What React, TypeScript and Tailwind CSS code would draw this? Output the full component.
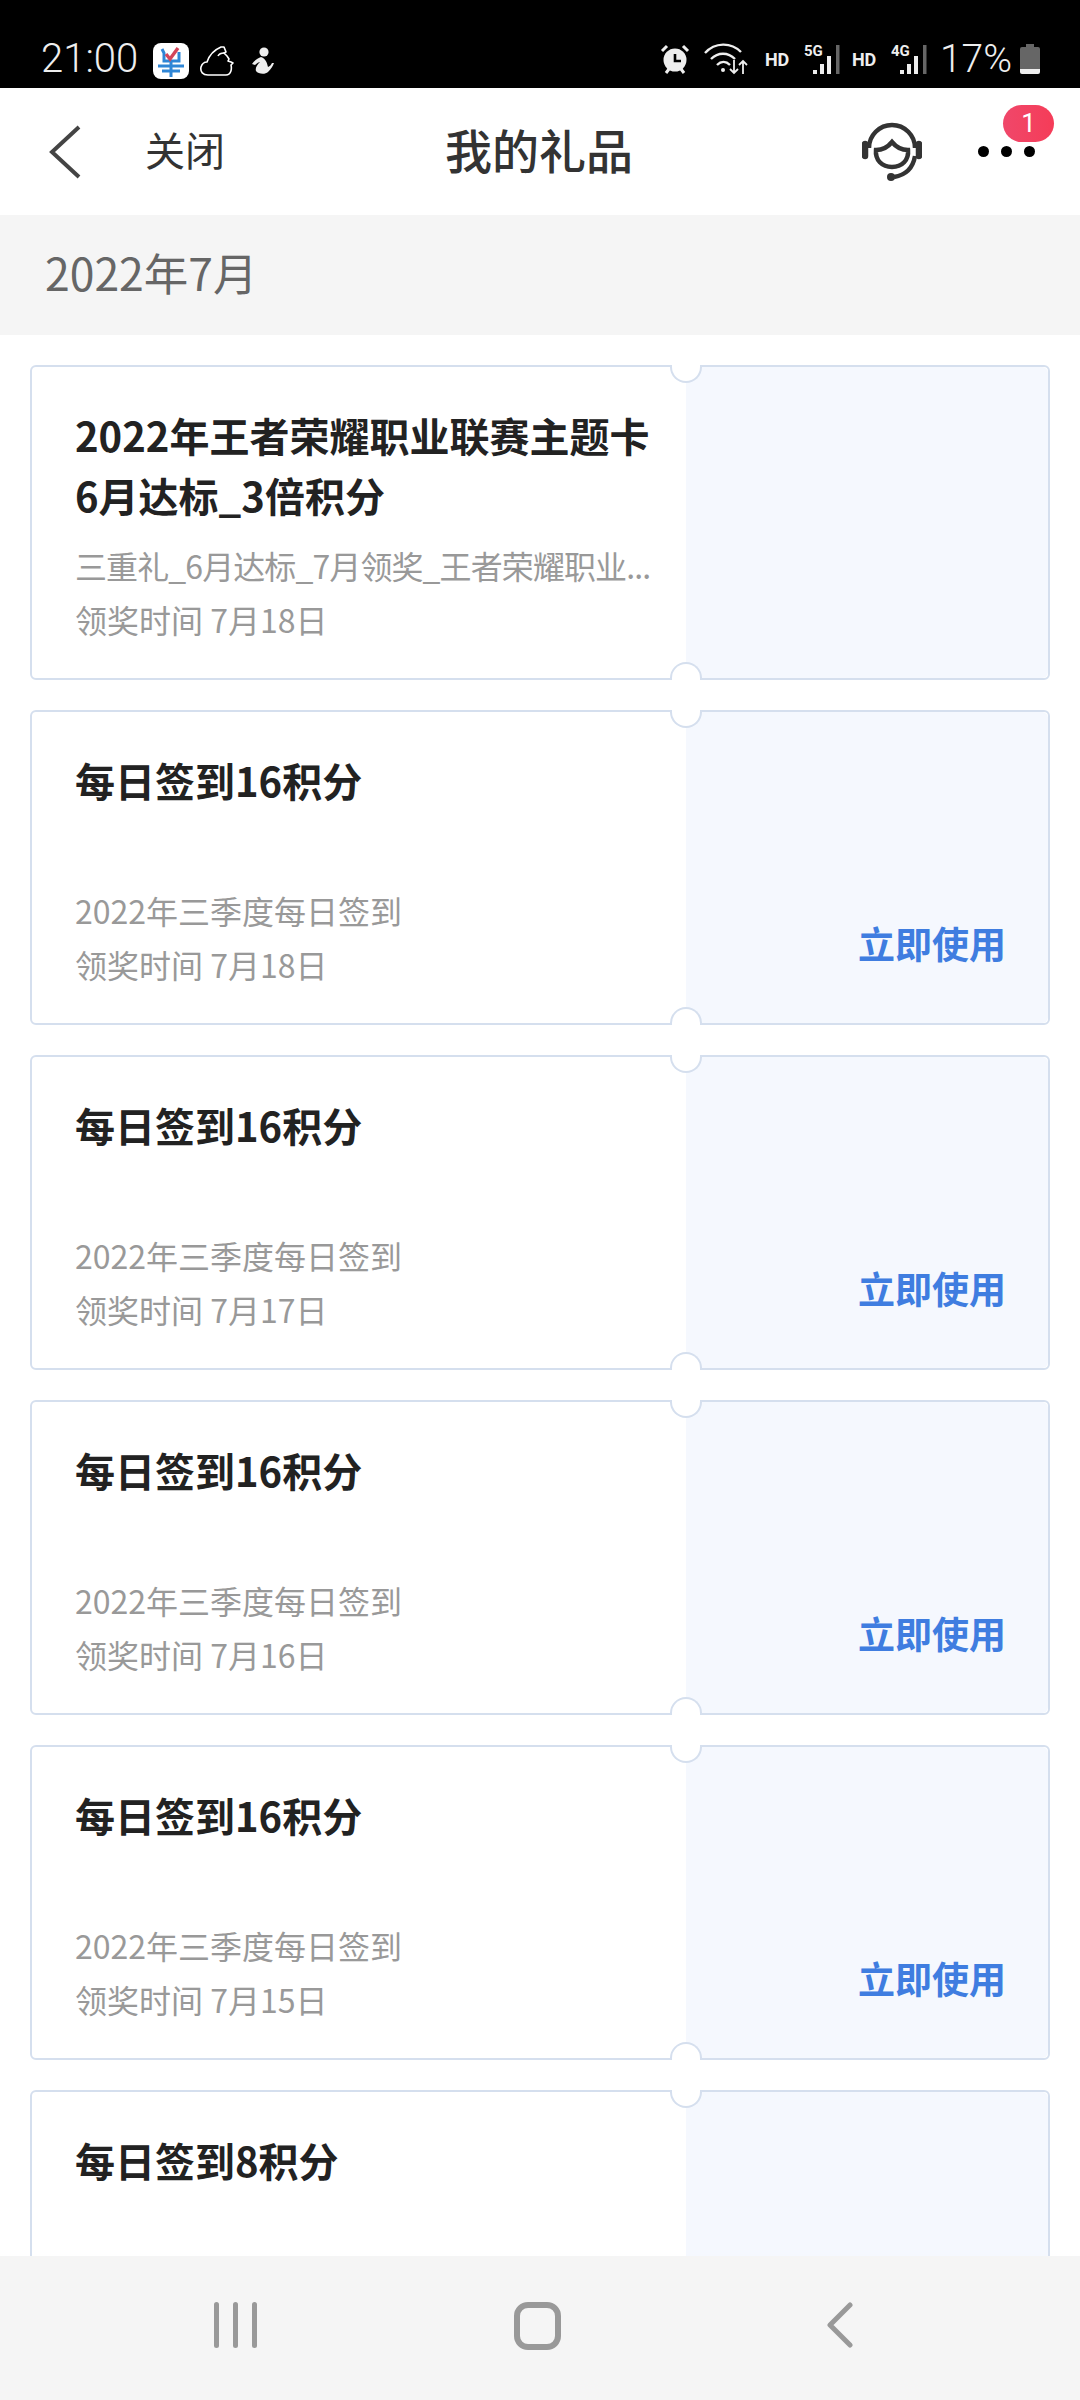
import React from "react";

const cjk = { fontFamily: '"Noto Sans CJK SC", "Noto Sans", sans-serif' };

function AppIcon() {
  return (
    <svg width="36" height="36" viewBox="0 0 36 36">
      <rect width="36" height="36" rx="8" fill="#fff" />
      <path d="M9 6l2 4v8h15V9M5 23h26M9 28h18M18 18v16" stroke="#2f86d6" strokeWidth="3" fill="none" />
      <path d="M13 11l4 5 8-11" stroke="#d2455a" strokeWidth="3.4" fill="none" />
    </svg>
  );
}

function Cloud() {
  return (
    <svg width="34" height="30" viewBox="0 0 34 30" fill="none" stroke="#fff" strokeWidth="1.6" strokeLinejoin="round">
      <path d="M8 29C3 29 0 26 1 21c1-3 3-5 6-5C9 10 14 4 21 1l3 0 2 5-2 1 3 3 2 3-1 2 3 1 2 1-2 2c1 4 0 10-5 10z" />
      <path d="M24 7c-3 0-5 1-6 3" />
    </svg>
  );
}

function Runner() {
  return (
    <svg width="27" height="28" viewBox="0 0 27 28" fill="#eee">
      <circle cx="14" cy="5" r="4.6" />
      <path d="M11 10c-3 1-7 4-9 7l3 1c2-2 4-3 5-3-3 3-5 6-4 9 2 3 9 4 12 1 3-3 5-6 6-9l-2 0c-1 2-2 3-4 4-1-4-2-8-7-10z" />
    </svg>
  );
}

function Alarm() {
  return (
    <svg width="30" height="30" viewBox="0 0 30 30">
      <circle cx="15" cy="16" r="11.5" fill="#eee" />
      <path d="M15 10v7h6" stroke="#000" strokeWidth="2.6" fill="none" />
      <path d="M2 7l5-5M28 7l-5-5M6 29l3-4M24 29l-3-4" stroke="#eee" strokeWidth="3" />
    </svg>
  );
}

function Wifi() {
  return (
    <svg width="44" height="32" viewBox="0 0 44 32" fill="none" stroke="#eee" strokeWidth="2.4">
      <path d="M1 10C11 -1 27 -1 37 9" />
      <path d="M7 16c7-7 17-7 24 0" />
      <path d="M13 22c4-4 9-4 13 0" />
      <circle cx="19" cy="27" r="2" fill="#eee" stroke="none" />
      <path d="M30 17v13M26 26l4 4 4-4" strokeWidth="1.8" />
      <path d="M39 31V18M35 22l4-4 4 4" strokeWidth="1.8" />
    </svg>
  );
}

function Signal({ label }: { label: string }) {
  return (
    <svg width="37" height="32" viewBox="0 0 37 32">
      <text x="0" y="13" fontSize="15" fontWeight="700" fill="#eee" fontFamily="Roboto, sans-serif">{label}</text>
      <rect x="9" y="27" width="4" height="4" fill="#eee" />
      <rect x="16" y="21" width="4" height="10" fill="#eee" />
      <rect x="23" y="13" width="4" height="18" fill="#eee" />
      <rect x="32" y="2" width="3.5" height="29" fill="#666" />
    </svg>
  );
}

function Battery() {
  return (
    <svg width="20" height="32" viewBox="0 0 20 32">
      <path d="M6 1h8v3h4a2 2 0 0 1 2 2v21H0V6a2 2 0 0 1 2-2h4z" fill="#666" />
      <path d="M0 26h20v3a2 2 0 0 1-2 2H2a2 2 0 0 1-2-2z" fill="#eee" />
    </svg>
  );
}

function StatusBar() {
  return (
    <div className="h-[88px] bg-black flex items-end pb-[9px] pl-[41px] pr-[40px] text-[#eee]">
      <span className="text-[40px] leading-[46px] font-light w-[100px] translate-y-[3px]" style={{ fontFamily: "Roboto, sans-serif" }}>21:00</span>
      <div className="ml-[12px] flex items-center">
        <AppIcon />
        <div className="ml-[11px]"><Cloud /></div>
        <div className="ml-[16px]"><Runner /></div>
      </div>
      <div className="ml-auto flex items-center">
        <Alarm />
        <div className="ml-[14px]"><Wifi /></div>
        <span className="ml-[17px] w-[28px] text-[18px] font-bold" style={{ fontFamily: "Roboto, sans-serif" }}>HD</span>
        <div className="ml-[11px]"><Signal label="5G" /></div>
        <span className="ml-[11px] w-[28px] text-[18px] font-bold" style={{ fontFamily: "Roboto, sans-serif" }}>HD</span>
        <div className="ml-[11px]"><Signal label="4G" /></div>
        <span className="ml-[12px] text-[39px] leading-[40px] font-light" style={{ fontFamily: "Roboto, sans-serif" }}>17%</span>
        <div className="ml-[8px]"><Battery /></div>
      </div>
    </div>
  );
}

function Headset() {
  return (
    <svg width="60" height="60" viewBox="0 0 60 60" fill="none" stroke="#333" strokeWidth="4.5">
      <path d="M7 26A23 23 0 0 1 53 26" />
      <path d="M3 22v12" strokeWidth="6.5" strokeLinecap="round" />
      <path d="M57 22v12" strokeWidth="6.5" strokeLinecap="round" />
      <path d="M14 28c7 0 12-3 16-8 4 5 9 8 16 8 1 10-6 17-16 17S13 38 14 28z" />
      <path d="M53 34c-2 12-9 19-21 21" />
      <circle cx="29" cy="55" r="4" fill="#333" stroke="none" />
    </svg>
  );
}

function NavBar() {
  return (
    <div className="h-[127px] bg-white flex items-center relative" style={cjk}>
      <svg className="ml-[47px]" width="36" height="56" viewBox="0 0 36 56" fill="none" stroke="#444" strokeWidth="4">
        <path d="M32 3L5 28l27 25" />
      </svg>
      <span className="ml-[62px] text-[40px] text-[#333] leading-none -translate-y-[3px]">关闭</span>
      <span className="ml-[220px] text-[47px] font-medium text-[#333] leading-none -translate-y-[3px]">我的礼品</span>
      <div className="ml-[229px]"><Headset /></div>
      <div className="ml-[56px] flex gap-[12px]">
        <div className="w-[11px] h-[11px] rounded-full bg-black" />
        <div className="w-[11px] h-[11px] rounded-full bg-black" />
        <div className="w-[11px] h-[11px] rounded-full bg-black" />
      </div>
      <div className="absolute left-[1003px] top-[17px] w-[51px] h-[37px] rounded-full bg-gradient-to-r from-[#f0476a] to-[#f53c58] text-white text-[26px] leading-[37px] text-center" style={{ fontFamily: "Roboto, sans-serif" }}>1</div>
    </div>
  );
}

function Card({ title, desc, time, action, tight }: { title: React.ReactNode; desc: string; time: string; action?: boolean; tight?: boolean }) {
  return (
    <div className="relative h-[315px] shrink-0 flex border-2 border-[#d5dfee] rounded-[6px]" style={cjk}>
      <div className="w-[654px] bg-white rounded-l-[6px] pl-[43px] pt-[38px]">
        <div className="h-[120px] text-[40px] leading-[60px] font-bold text-[#222] whitespace-pre-line">{title}</div>
        <div className={tight ? "mt-[13px] text-[32px] leading-[54px] text-[#999] whitespace-nowrap tracking-[-0.9px]" : "mt-[13px] text-[32px] leading-[54px] text-[#999] whitespace-nowrap"}>{desc}</div>
        <div className="text-[32px] leading-[54px] text-[#999]">{time}</div>
      </div>
      <div className="flex-1 bg-[#f5f8fe] rounded-r-[6px] flex items-end justify-end pr-[42px] pb-[53px]">
        {action && <span className="text-[37px] leading-[54px] font-bold text-[#3f7de0]">立即使用</span>}
      </div>
      <div className="absolute left-[638px] top-[-2px] w-[32px] h-[18px] bg-white border-2 border-t-0 border-[#d5dfee] rounded-b-full" />
      <div className="absolute left-[638px] bottom-[-2px] w-[32px] h-[18px] bg-white border-2 border-b-0 border-[#d5dfee] rounded-t-full" />
    </div>
  );
}

const items = [
  { title: "2022年王者荣耀职业联赛主题卡\n6月达标_3倍积分", desc: "三重礼_6月达标_7月领奖_王者荣耀职业...", time: "领奖时间 7月18日", action: false, tight: true },
  { title: "每日签到16积分", desc: "2022年三季度每日签到", time: "领奖时间 7月18日", action: true, tight: false },
  { title: "每日签到16积分", desc: "2022年三季度每日签到", time: "领奖时间 7月17日", action: true, tight: false },
  { title: "每日签到16积分", desc: "2022年三季度每日签到", time: "领奖时间 7月16日", action: true, tight: false },
  { title: "每日签到16积分", desc: "2022年三季度每日签到", time: "领奖时间 7月15日", action: true, tight: false },
];

function BottomNav() {
  return (
    <div className="h-[144px] shrink-0 bg-[#f5f5f5] relative z-10 flex items-start pt-[46px]">
      <div className="ml-[214px] flex gap-[14px]">
        <div className="w-[5px] h-[46px] rounded-full bg-[#999]" />
        <div className="w-[5px] h-[46px] rounded-full bg-[#999]" />
        <div className="w-[5px] h-[46px] rounded-full bg-[#999]" />
      </div>
      <div className="ml-[257px] w-[47px] h-[48px] rounded-[14px] border-[6px] border-[#999]" />
      <svg className="ml-[265px]" width="28" height="46" viewBox="0 0 28 46" fill="none" stroke="#999" strokeWidth="5" strokeLinecap="round" strokeLinejoin="round">
        <path d="M24 3L4 23l20 20" />
      </svg>
    </div>
  );
}

export default function App() {
  return (
    <div className="w-[1080px] h-[2400px] flex flex-col overflow-hidden bg-white">
      <StatusBar />
      <NavBar />
      <div className="h-[120px] shrink-0 bg-[#f5f5f5] flex items-center pl-[45px] text-[44.5px] text-[#666] leading-none" style={cjk}>
        <span className="-translate-y-[3px]">2022年7月</span>
      </div>
      <div className="flex-1 min-h-0 overflow-hidden px-[30px] pt-[30px] flex flex-col gap-[30px]">
        {items.map((it, i) => (
          <Card key={i} title={it.title} desc={it.desc} time={it.time} action={it.action} tight={it.tight} />
        ))}
        <div className="relative h-[315px] shrink-0 flex border-2 border-[#d5dfee] rounded-[6px]" style={cjk}>
          <div className="w-[654px] bg-white rounded-l-[6px] pl-[43px] pt-[38px]">
            <div className="text-[40px] leading-[60px] font-bold text-[#222]">每日签到8积分</div>
          </div>
          <div className="flex-1 bg-[#f5f8fe] rounded-r-[6px]" />
          <div className="absolute left-[638px] top-[-2px] w-[32px] h-[18px] bg-white border-2 border-t-0 border-[#d5dfee] rounded-b-full" />
        </div>
      </div>
      <BottomNav />
    </div>
  );
}
